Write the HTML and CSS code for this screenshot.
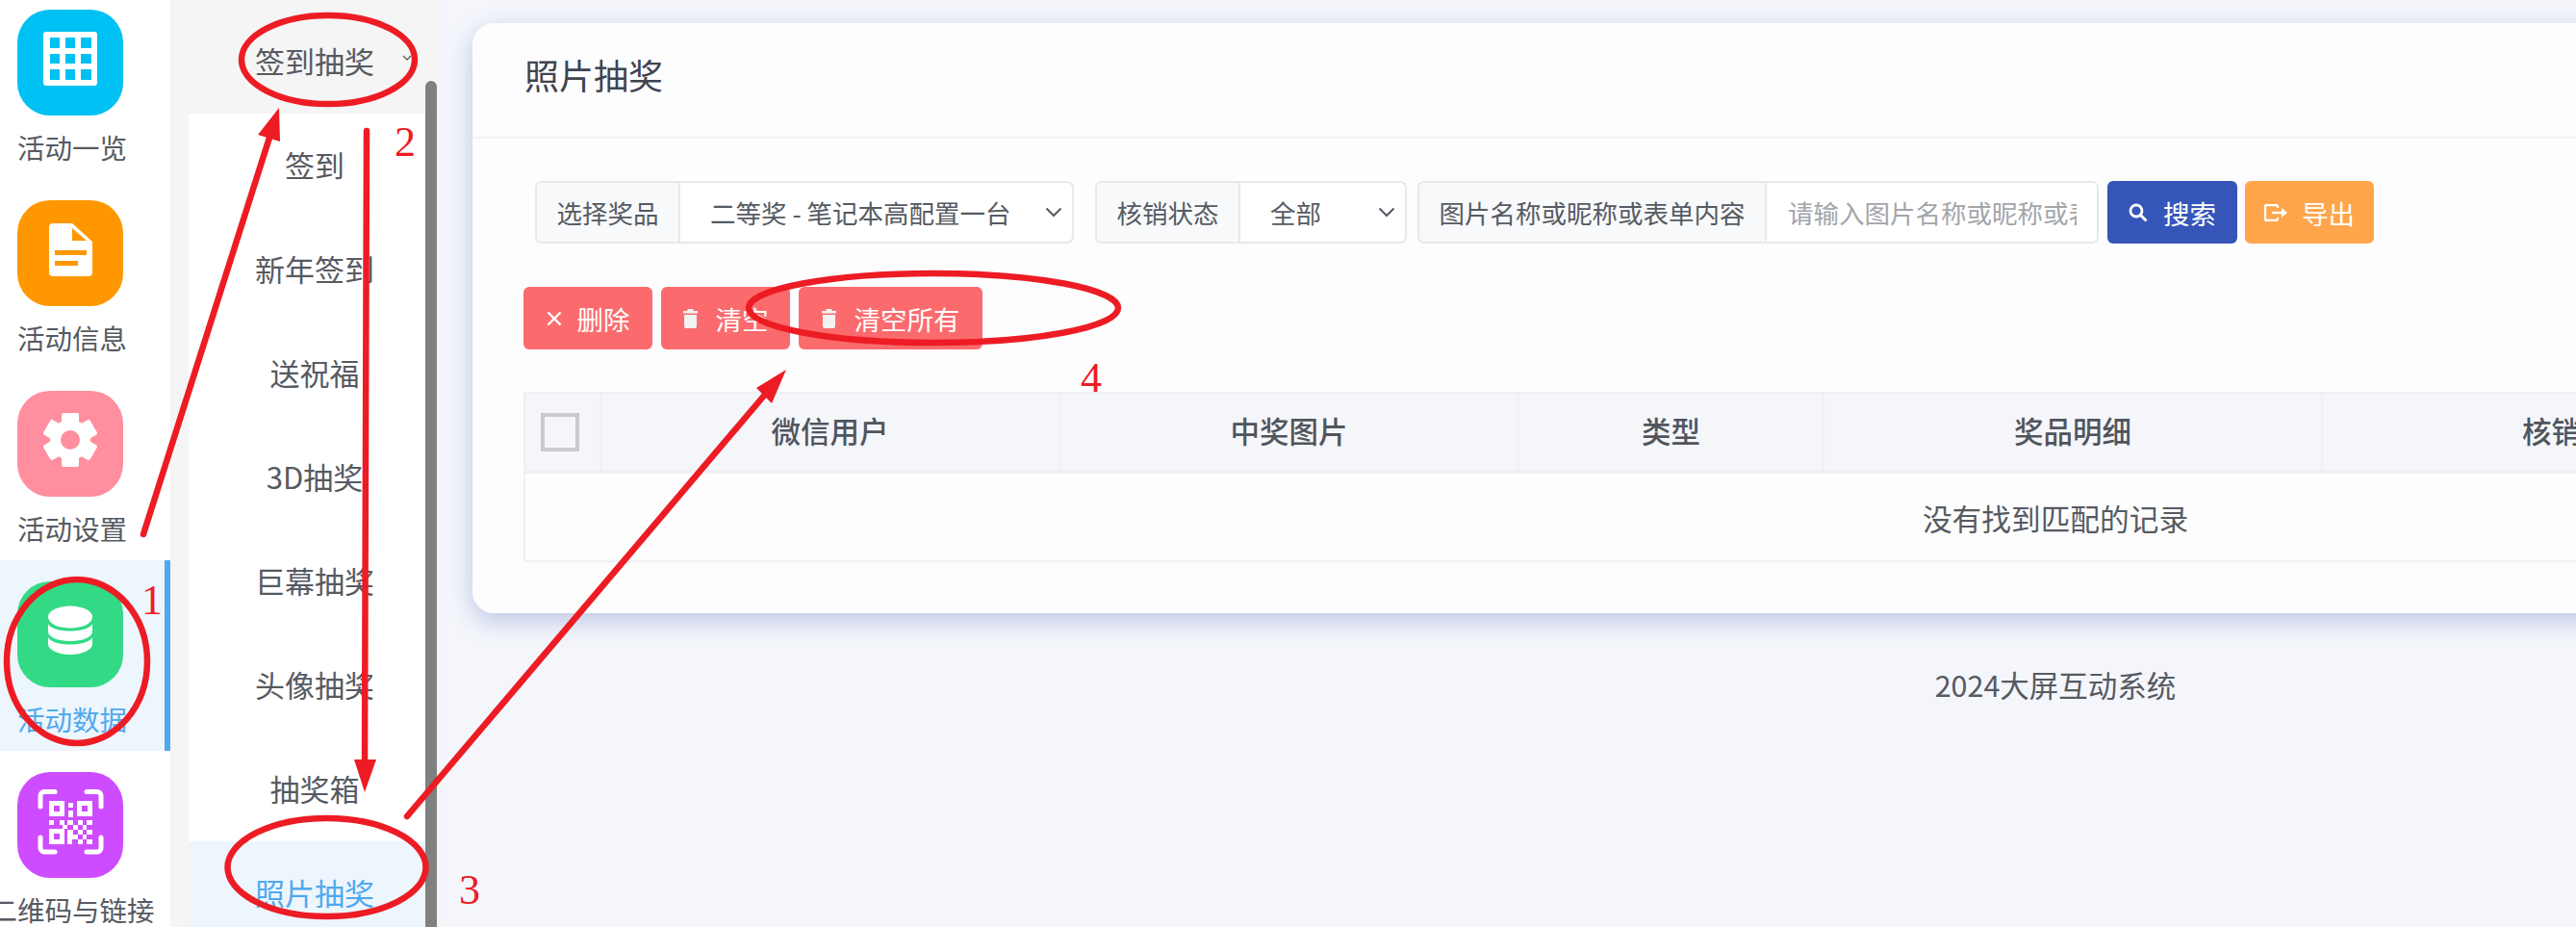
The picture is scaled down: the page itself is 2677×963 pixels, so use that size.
FILE: index.html
```html
<!DOCTYPE html>
<html lang="zh-CN">
<head>
<meta charset="utf-8">
<title>照片抽奖</title>
<link rel="stylesheet" href="styles.css">
</head>
<body>
<div class="app">
  <nav class="rail">
    <a class="rail-item">
      <svg class="rail-icon" viewBox="0 0 110 110"><rect width="110" height="110" rx="34" fill="#00c1f3"/><rect x="27" y="23" width="56" height="56" rx="3" fill="#fff"/><g fill="#00c1f3"><rect x="34" y="29" width="10" height="11"/><rect x="50" y="29" width="10" height="11"/><rect x="66" y="29" width="11" height="11"/><rect x="34" y="46" width="10" height="10"/><rect x="50" y="46" width="10" height="10"/><rect x="66" y="46" width="11" height="10"/><rect x="34" y="62" width="10" height="11"/><rect x="50" y="62" width="10" height="11"/><rect x="66" y="62" width="11" height="11"/></g></svg>
      <span class="rail-label">活动一览</span>
    </a>
    <a class="rail-item">
      <svg class="rail-icon" viewBox="0 0 110 110"><rect width="110" height="110" rx="34" fill="#ff9800"/><path d="M37 24H57L78 43V75a4 4 0 0 1-4 4H37a4 4 0 0 1-4-4V28a4 4 0 0 1 4-4z" fill="#fff"/><path d="M57 29L72 42H57z" fill="#ff9800"/><rect x="39" y="52" width="33" height="5" fill="#ff9800"/><rect x="39" y="63" width="24" height="5" fill="#ff9800"/></svg>
      <span class="rail-label">活动信息</span>
    </a>
    <a class="rail-item">
      <svg class="rail-icon" viewBox="0 0 110 110"><rect width="110" height="110" rx="34" fill="#ff8e9e"/><g transform="translate(55 51)" fill="#fff"><circle r="21"/><rect x="-9" y="-28" width="18" height="56" rx="2"/><rect x="-9" y="-28" width="18" height="56" rx="2" transform="rotate(60)"/><rect x="-9" y="-28" width="18" height="56" rx="2" transform="rotate(120)"/><circle r="10" fill="#ff8e9e"/></g></svg>
      <span class="rail-label">活动设置</span>
    </a>
    <a class="rail-item is-active">
      <svg class="rail-icon" viewBox="0 0 110 110"><rect width="110" height="110" rx="34" fill="#32da85"/><g fill="#fff"><ellipse cx="55" cy="37" rx="23" ry="11.5"/><path d="M32 44C36 54 74 54 78 44V52C78 58 68 62 55 62C42 62 32 58 32 52z"/><path d="M32 58C36 68 74 68 78 58V65C78 71 68 76 55 76C42 76 32 71 32 65z"/></g></svg>
      <span class="rail-label">活动数据</span>
    </a>
    <a class="rail-item">
      <svg class="rail-icon" viewBox="0 0 110 110"><rect width="110" height="110" rx="34" fill="#ce4cff"/><g fill="none" stroke="#fff" stroke-width="5" stroke-linecap="round"><path d="M39 20.500H28a4 4 0 0 0-4 4V36"/><path d="M72 20.500H83a4 4 0 0 1 4 4V36"/><path d="M39 83H28a4 4 0 0 1-4-4V68"/><path d="M72 83H83a4 4 0 0 0 4-4V68"/></g><g fill="#fff"><path fill-rule="evenodd" d="M33 30h16v16H33zM38 35v6h6v-6zM62 30h16v16H62zM67 35v6h6v-6zM33 59h16v16H33zM38 64v6h6v-6z"/><rect x="53" y="32" width="5" height="5"/><rect x="53" y="40" width="5" height="7"/><rect x="33" y="50" width="5" height="5"/><rect x="44" y="50" width="5" height="5"/><rect x="52" y="50" width="6" height="5"/><rect x="63" y="50" width="5" height="5"/><rect x="72" y="50" width="6" height="5"/><rect x="47" y="55" width="5" height="4"/><rect x="58" y="55" width="5" height="5"/><rect x="68" y="55" width="4" height="5"/><rect x="52" y="60" width="6" height="5"/><rect x="63" y="60" width="5" height="5"/><rect x="72" y="60" width="6" height="5"/><rect x="52" y="65" width="11" height="5"/><rect x="68" y="65" width="4" height="5"/><rect x="52" y="70" width="5" height="5"/><rect x="63" y="70" width="5" height="5"/><rect x="72" y="70" width="6" height="5"/></g></svg>
      <span class="rail-label">二维码与链接</span>
    </a>
  </nav>

  <aside class="subnav">
    <div class="subnav-col">
      <div class="subnav-head">签到抽奖
        <svg class="subnav-caret" viewBox="0 0 10 7"><path d="M1 1l4 4 4-4" fill="none" stroke="#666" stroke-width="1.500"/></svg>
      </div>
      <ul class="subnav-list">
        <li class="subnav-row">签到</li>
        <li class="subnav-row">新年签到</li>
        <li class="subnav-row">送祝福</li>
        <li class="subnav-row">3D抽奖</li>
        <li class="subnav-row">巨幕抽奖</li>
        <li class="subnav-row">头像抽奖</li>
        <li class="subnav-row">抽奖箱</li>
        <li class="subnav-row is-active">照片抽奖</li>
      </ul>
    </div>
    <div class="scrollbar"></div>
  </aside>

  <main class="main">
    <section class="card">
      <header class="card-head">照片抽奖</header>
      <div class="card-body">
        <form class="filters">
          <div class="field field-prize">
            <span class="field-label">选择奖品</span>
            <div class="field-select"><span>二等奖 - 笔记本高配置一台</span>
              <svg class="select-caret" viewBox="0 0 18 11"><path d="M1.500 1.500L9 9l7.500-7.500" fill="none" stroke="#555b63" stroke-width="2"/></svg>
            </div>
          </div>
          <div class="field field-state">
            <span class="field-label">核销状态</span>
            <div class="field-select"><span>全部</span>
              <svg class="select-caret" viewBox="0 0 18 11"><path d="M1.500 1.500L9 9l7.500-7.500" fill="none" stroke="#555b63" stroke-width="2"/></svg>
            </div>
          </div>
          <div class="field field-keyword">
            <span class="field-label">图片名称或昵称或表单内容</span>
            <input class="field-input" type="text" placeholder="请输入图片名称或昵称或表单内容">
          </div>
          <button type="button" class="btn btn-search">
            <svg class="btn-icon" width="20" height="20" viewBox="0 0 20 20"><circle cx="8" cy="8" r="6" fill="none" stroke="#fff" stroke-width="2.800"/><path d="M12.500 12.500L18.500 18.500" stroke="#fff" stroke-width="3"/></svg>
            搜索</button>
          <button type="button" class="btn btn-export">
            <svg class="btn-icon" width="25" height="18" viewBox="0 0 25 18"><path d="M14 4V3a2 2 0 0 0-2-2H3a2 2 0 0 0-2 2v12a2 2 0 0 0 2 2h9a2 2 0 0 0 2-2v-1" fill="none" stroke="#fff" stroke-width="2.400"/><path d="M8 9h10" stroke="#fff" stroke-width="2.400"/><path d="M18 4l6 5-6 5z" fill="#fff"/></svg>
            导出</button>
        </form>

        <div class="actions">
          <button type="button" class="btn btn-danger btn-delete">
            <svg class="btn-icon" width="16" height="16" viewBox="0 0 16 16"><path d="M1.500 1.500l13 13M14.500 1.500l-13 13" stroke="#fff" stroke-width="2.400"/></svg>
            删除</button>
          <button type="button" class="btn btn-danger btn-clear">
            <svg class="btn-icon" width="15" height="20" viewBox="0 0 15 20"><path fill="#f2f2f2" d="M5 0h5l1 2h4v2.500H0V2h4zM1 6h13v12a2 2 0 0 1-2 2H3a2 2 0 0 1-2-2z"/></svg>
            清空</button>
          <button type="button" class="btn btn-danger btn-clear-all">
            <svg class="btn-icon" width="15" height="20" viewBox="0 0 15 20"><path fill="#f2f2f2" d="M5 0h5l1 2h4v2.500H0V2h4zM1 6h13v12a2 2 0 0 1-2 2H3a2 2 0 0 1-2-2z"/></svg>
            清空所有</button>
        </div>

        <table class="records">
          <colgroup>
            <col class="col-check"><col class="col-user"><col class="col-photo"><col class="col-type"><col class="col-detail"><col class="col-state"><col>
          </colgroup>
          <thead>
            <tr>
              <th><span class="checkbox"></span></th>
              <th>微信用户</th>
              <th>中奖图片</th>
              <th>类型</th>
              <th>奖品明细</th>
              <th>核销状态</th>
              <th>操作</th>
            </tr>
          </thead>
          <tbody>
            <tr><td colspan="7">没有找到匹配的记录</td></tr>
          </tbody>
        </table>
      </div>
    </section>
    <footer class="foot">2024大屏互动系统</footer>
  </main>

  <svg class="marks" viewBox="0 0 2677 963" width="2677" height="963">
    <g class="mark-line">
      <ellipse cx="341" cy="62" rx="90" ry="46"/>
      <ellipse cx="80" cy="687" rx="73" ry="85"/>
      <ellipse cx="339.500" cy="901" rx="103" ry="51"/>
      <ellipse cx="970" cy="320" rx="192" ry="36"/>
      <path d="M149 555L280 143"/>
      <path d="M381 136L379 795"/>
      <path d="M423 848L794 411"/>
    </g>
    <g class="mark-fill">
      <path d="M290 112L268 140L291 147z"/>
      <path d="M368 789H391L379 823z"/>
      <path d="M817 384L786 403L802 419z"/>
    </g>
    <text class="mark-num" x="147" y="638">1</text>
    <text class="mark-num" x="410" y="162">2</text>
    <text class="mark-num" x="477" y="939">3</text>
    <text class="mark-num" x="1123" y="407">4</text>
  </svg>
</div>
</body>
</html>
```
FILE: styles.css
```css
* { box-sizing: border-box; }
html, body { margin: 0; padding: 0; height: 100%; overflow: hidden; }
body {
  font-family: "Noto Sans CJK SC", "Noto Sans", sans-serif;
  color: #565a62;
  background: #f4f6fb;
}
.app { position: relative; display: flex; width: 2677px; height: 963px; overflow: hidden; }

/* primary rail */
.rail { flex: none; width: 177px; background: #fff; margin-top: -12px; }
.rail-item {
  display: flex; flex-direction: column; align-items: center;
  width: 177px; height: 198px; padding: 22px 27px 0 0;
}
.rail-icon { display: block; width: 110px; height: 110px; margin-left: -4px; flex: none; }
.rail-label { display: block; margin-top: 15px; font-size: 28.500px; line-height: 36px; white-space: nowrap; color: #565a62; }
.rail-item.is-active { background: #edf5fd; border-right: 6px solid #4fa9ee; padding-right: 21px; }
.rail-item.is-active .rail-label { color: #4fa9ee; }

/* secondary nav */
.subnav { flex: none; display: flex; width: 281px; padding-left: 19px; background: #f5f5f5; }
.subnav-col { width: 246px; }
.subnav-head {
  position: relative; display: flex; align-items: center; justify-content: center;
  height: 118px; padding: 7px 0 0 16px; font-size: 31px; color: #565a62;
}
.subnav-caret { position: absolute; left: 222px; top: 57px; width: 10px; height: 7px; }
.subnav-list { margin: 0; padding: 0; list-style: none; background: #fff; height: 845px; overflow: hidden; }
.subnav-row {
  display: flex; align-items: center; justify-content: center;
  height: 108px; padding: 0 0 3px 16px; font-size: 31px;
}
.subnav-row.is-active { background: #edf5fd; color: #4fa9ee; }
.scrollbar { width: 12px; margin-top: 84px; background: #808080; border-radius: 6px 6px 0 0; }

/* main */
.main { flex: none; width: 3356px; padding: 24px 33px 0; }
.card {
  height: 613px; background: #fdfdfe; border-radius: 22px;
  box-shadow: 0 8px 26px rgba(70, 100, 180, .32);
}
.card-head {
  display: flex; align-items: center;
  height: 120px; padding: 0 0 12px 54px; font-size: 36px; color: #3f4450;
  border-bottom: 2px solid #f2f3f5;
}
.card-body { padding: 44px 53px 0; }

.filters { display: flex; align-items: stretch; height: 65px; margin-left: 12px; }
.field {
  display: flex; flex: none; height: 65px;
  border: 2px solid #e6e8ec; border-radius: 7px; overflow: hidden;
  font-size: 26.500px; background: #fff;
}
.field-prize { width: 560px; margin-right: 22px; }
.field-state { width: 324px; margin-right: 11px; }
.field-keyword { width: 708px; margin-right: 9px; }
.field-label {
  display: flex; align-items: center; justify-content: center; flex: none;
  width: 149px; background: #f8f9fb; border-right: 2px solid #e6e8ec; white-space: nowrap;
}
.field-keyword .field-label { width: 361px; }
.field-select {
  flex: 1; display: flex; align-items: center; justify-content: space-between;
  padding: 0 10px 0 31px; white-space: nowrap;
}
.select-caret { width: 18px; height: 11px; flex: none; }
.field-input {
  flex: 1; min-width: 0; border: 0; outline: 0; padding: 0 21px 0 22px;
  font: inherit; color: #565a62; background: #fff;
}
.field-input::placeholder { color: #a2a5ab; opacity: 1; }

.btn {
  display: flex; align-items: center; justify-content: center; flex: none;
  height: 65px; padding: 0; border: 0; border-radius: 6px;
  font-family: inherit; font-size: 27.500px; color: #fff;
}
.btn-search { width: 135px; margin-right: 8px; background: #3556b8; gap: 16px; }
.btn-export { width: 134px; background: #ffa64d; gap: 14px; }

.actions { display: flex; gap: 9px; margin-top: 45px; }
.btn-danger { background: #fb6b6e; }
.btn-delete { width: 134px; gap: 16px; }
.btn-clear { width: 134px; gap: 19px; }
.btn-clear-all { width: 191px; gap: 19px; }

.records {
  width: 3184px; margin-top: 44px; table-layout: fixed;
  border-collapse: separate; border-spacing: 0;
  border: 2px solid #eef0f3;
}
.col-check { width: 79px; }
.col-user { width: 477px; }
.col-photo { width: 477px; }
.col-type { width: 317px; }
.col-detail { width: 518px; }
.col-state { width: 538px; }
.records th {
  height: 83px; padding: 0 0 3px; background: #f5f6fa;
  border-right: 2px solid #eef0f3; border-bottom: 4px solid #eef0f3;
  font-size: 30.500px; font-weight: 500; color: #50555d; text-align: center;
}
.records th:last-child { border-right: 0; }
.records td { height: 90px; padding: 0; text-align: center; font-size: 30.700px; background: #fdfdfe; }
.checkbox {
  display: block; width: 40px; height: 40px; margin: 4px 0 0 16px;
  border: 4px solid #cbcbcb; background: #f5f6fa;
}

.foot { margin-top: 54px; text-align: center; font-size: 30.500px; line-height: 40px; color: #565a62; }

/* red hand-drawn annotations over the page */
.marks { position: absolute; left: 0; top: 0; pointer-events: none; }
.mark-line { fill: none; stroke: #ed1c24; stroke-width: 6.500; stroke-linecap: round; }
.mark-fill { fill: #ed1c24; }
.mark-num { font-family: "Liberation Serif", serif; font-size: 44px; fill: #ed1c24; }
```
